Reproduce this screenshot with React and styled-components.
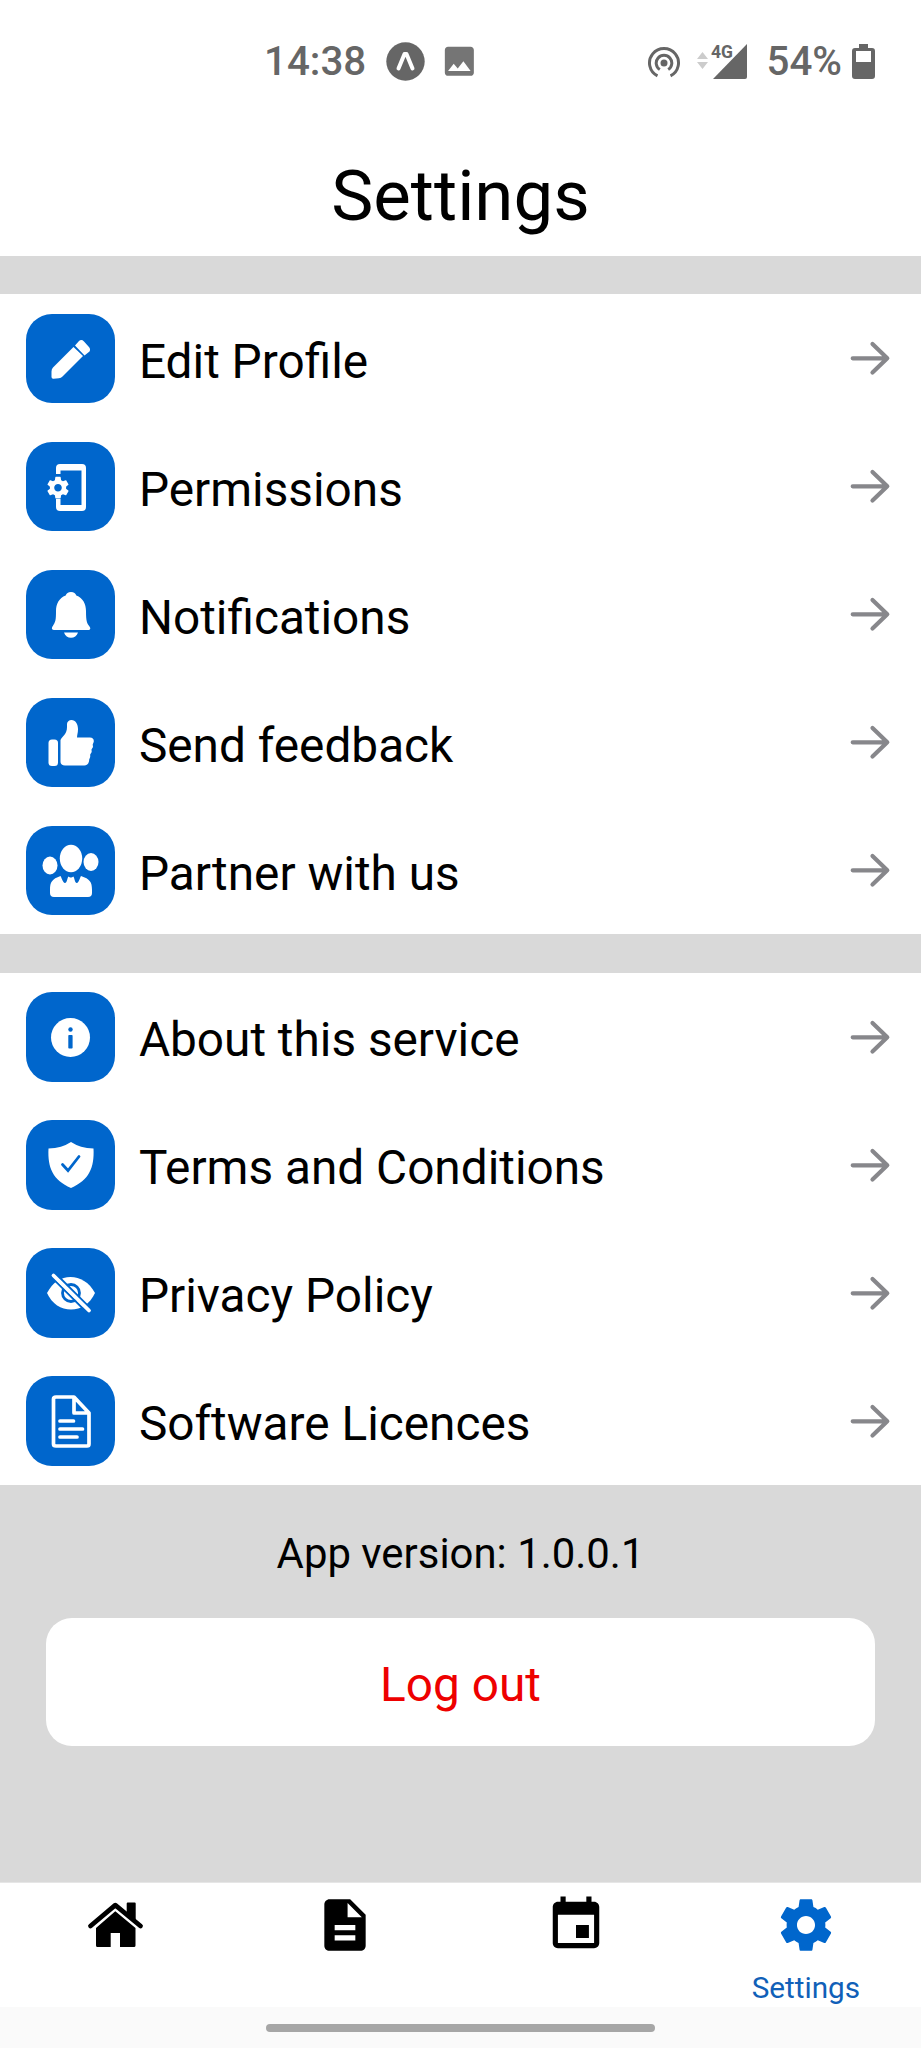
import React from "react";
import styled, { createGlobalStyle } from "styled-components";
import { MdInsertPhoto } from "react-icons/md";

const Global = createGlobalStyle`
  *{box-sizing:border-box}
  body{margin:0;background:#fff;font-family:Roboto,sans-serif;color:#000}
`;

const Screen = styled.div`
  width: 921px; height: 2048px; display: flex; flex-direction: column;
  background: #d9d9d9; overflow: hidden;
`;
const Header = styled.header`
  height: 256px; background: #fff; display: flex; flex-direction: column; flex: none;
`;
const StatusBar = styled.div`
  height: 123px; padding: 0 46px 0 264px; display: flex; align-items: center;
  justify-content: space-between; color: #666;
`;
const StatusGroup = styled.div`display: flex; align-items: center;`;
const StatusText = styled.span`
  font-size: 40.3px; font-weight: 500; line-height: 48px; margin: 0 ${p => p.$after}px 0 ${p => p.$before || 0}px;
`;
const PhotoIcon = styled(MdInsertPhoto)`
  width: 38.7px; height: 38.7px; color: #757575; margin-left: 15px;
`;
const Title = styled.h1`
  margin: 35px 0 0; text-align: center; font-weight: 400; font-size: 70.8px; line-height: 76px;
`;
const List = styled.section`margin-top: 38.4px; background: #fff; flex: none;`;
const Row = styled.div`
  height: 128px; padding: 0 26px; display: flex; align-items: center;
`;
const Tile = styled.div`
  width: 89.4px; height: 89.6px; border-radius: 26px; background: #0066cc; color: #fff;
  display: flex; flex: none;
  > svg { width: 89px; height: 90px; }
`;
const Label = styled.span`
  flex: 1; margin-left: 23.5px; padding-top: 7.4px; font-size: 47.75px; line-height: 56px; white-space: nowrap;
`;
const Version = styled.p`
  margin: 45px 0 0; text-align: center; font-size: 41.9px; line-height: 48px;
`;
const Logout = styled.button`
  margin: 39.8px 46px 0; height: 128px; border: 0; border-radius: 26px; background: #fff;
  color: #ee0000; font: 400 47.75px/56px Roboto, sans-serif; padding: 7px 0 0;
`;
const TabBar = styled.nav`
  margin-top: auto; height: 125px; flex: none; border-top: 1px solid #e6e6e6; background: #fff;
  display: grid; grid-template-columns: repeat(4, 1fr);
`;
const Tab = styled.div`
  display: flex; flex-direction: column; align-items: center; padding-top: 11px; color: ${p => p.$active ? "#0066cc" : "#000"};
  svg { width: 62px; height: 62px; flex: none; }
`;
const TabLabel = styled.span`margin-top: 14px; font-size: 29.7px; line-height: 36px; color: #1060b8;`;
const HomeIndicator = styled.div`
  height: 41px; flex: none; background: #fafafa; display: flex; justify-content: center; padding-top: 17px;
  &::before { content: ""; width: 389px; height: 8px; border-radius: 4px; background: #a6a6a6; }
`;

/* Tile drawings share one 89 x 90 canvas */
const T = ({ children }) => <svg viewBox="0 0 89 90" fill="currentColor">{children}</svg>;
const gear = "M19.43 12.98c.04-.32.07-.64.07-.98s-.03-.66-.07-.98l2.11-1.65c.19-.15.24-.42.12-.64l-2-3.46c-.12-.22-.39-.3-.61-.22l-2.49 1c-.52-.4-1.08-.73-1.69-.98l-.38-2.65C14.46 2.18 14.25 2 14 2h-4c-.25 0-.46.18-.49.42l-.38 2.65c-.61.25-1.17.59-1.69.98l-2.49-1c-.23-.09-.49 0-.61.22l-2 3.46c-.13.22-.07.49.12.64l2.11 1.65c-.04.32-.07.65-.07.98s.03.66.07.98l-2.11 1.65c-.19.15-.24.42-.12.64l2 3.46c.12.22.39.3.61.22l2.49-1c.52.4 1.08.73 1.69.98l.38 2.65c.03.24.24.42.49.42h4c.25 0 .46-.18.49-.42l.38-2.65c.61-.25 1.17-.59 1.69-.98l2.49 1c.23.09.49 0 .61-.22l2-3.46c.12-.22.07-.49-.12-.64l-2.11-1.65zM12 15.5c-1.93 0-3.5-1.57-3.5-3.5s1.57-3.5 3.5-3.5 3.5 1.57 3.5 3.5-1.57 3.5-3.5 3.5z";

const Pencil = () => <T><path d="M47.5 33 27 53.5q-1.500 1.500-1.500 4V63q0 2 2 1.800l5.500-.5q2-.2 3.500-1.800l20.500-20.500zM49 31.500 53 27q2.500-2 5 .5l4.500 5q2.500 2.500 1 5L58.500 41.500z" /></T>;
const Phone = () => <T>
  <path d="M30 32v-6q0-4 4-4h22q4 0 4 4v39q0 4-4 4H34q-4 0-4-4v-8h4.500v6h21V28.500h-21V32z" />
  <svg x="19" y="32.700" width="26" height="26" viewBox="0 0 24 24"><path d={gear} /></svg>
</T>;
const Bell = () => <T>
  <path d="M45 22c3 0 4.500 1.500 5.300 3.500C57 28 60 34 60 41c0 11 1 12 3.500 15.500 2 3-.2 3.500-2 3.500H28.500c-2 0-3.700-1-1.700-4C29.500 52 30 50 30 41c0-7 3-13 9.700-15.500C40.500 23.500 42 22 45 22zM38 62.500h14c-1 3.500-4 5.200-7 5.200s-6-1.700-7-5.200z" />
</T>;
const Thumb = () => <T>
  <rect x="22.500" y="41.500" width="9.500" height="26.500" rx="3.500" />
  <path d="M34.500 42c2-4 6.500-6 6.500-13v-3c0-2 2-4 4.500-4 4 0 6.500 4 6.500 9 0 4-1 6-1 8.500h13c3 0 4.500 2.500 3.500 5l-.8 2 .3 2.500-1.500 2.500.2 2.500-1.500 2.500v2.500l-1 2.500c0 3-1.500 6-5 6H39c-3 0-4.500-1.500-4.500-4z" />
</T>;
const People = () => <T>
  <ellipse cx="45" cy="32.500" rx="11.200" ry="13.700" />
  <ellipse cx="24" cy="39.500" rx="7.500" ry="9" /><ellipse cx="65" cy="36" rx="7.500" ry="9" />
  <path d="M24 64c0-8 2-11 10.500-14 1.200 2 2.200 6.500 4.500 7 2 0 2-4.500 3.500-6.500 1 .8 1.300 1 2.300 1s1.500-.2 2.500-1c1.500 2 1.500 6.500 3.500 6.500 2.200-.5 3-5 4.200-7C64 53 66 56 66 64v3q0 4-4 4H28q-4 0-4-4z" />
</T>;
const Info = () => <T>
  <circle cx="44.500" cy="45.500" r="19.500" />
  <g fill="#0066cc"><circle cx="44.500" cy="37.500" r="2.200" /><rect x="42.300" y="43" width="4.300" height="13.500" rx=".8" /></g>
</T>;
const Shield = () => <T>
  <path d="M45 22q9 6 22.500 6.500C68.500 48 63 60 45 68 27 60 21.500 48 22.500 28.500Q36 28 45 22z" />
  <path d="m36.500 44.500 5.500 6L53 36.500" fill="none" stroke="#0066cc" strokeWidth="2.800" strokeLinecap="round" />
</T>;
const EyeOff = () => <T>
  <path d="M21 45c6-11 14-16 23.500-16S63 34 69 45c-5 11-14 16.500-24 16.500S26 56 21 45z" />
  <circle cx="45" cy="45" r="8.500" fill="none" stroke="#0066cc" strokeWidth="2.800" />
  <path d="M26 29.500 61.500 65M29.500 25.500 65 61" stroke="#0066cc" strokeWidth="2.200" />
  <path d="m27.500 27.500 35.500 35" stroke="currentColor" strokeWidth="3.800" strokeLinecap="round" />
</T>;
const Licence = () => <T>
  <path d="M30 21h18l15 16v31q0 2-2 2H30q-2.500 0-2.500-2V23q0-2 2.500-2zM48 22v15h14M34 45h13.500M34 53h22.500M34 61h17" fill="none" stroke="currentColor" strokeWidth="3.700" strokeLinecap="round" strokeLinejoin="round" />
</T>;

const Arrow = () => <svg width="45" height="42" viewBox="0 0 45 42" fill="none" stroke="#87878b" strokeWidth="4.200" strokeLinecap="round" strokeLinejoin="round"><path d="M2.700 21.300h34.500M22.500 7l14.800 14.300-14.800 14.300" /></svg>;

const ExpoIcon = styled.svg`width: 39px; height: 39px; flex: none;`;
const Expo = () => <ExpoIcon viewBox="0 0 39 39"><circle cx="19.500" cy="19.500" r="19.200" fill="#666" /><path d="m12.500 26.500 6-14.500h2l6 14.500" fill="none" stroke="#fff" strokeWidth="4" strokeLinecap="round" strokeLinejoin="round" /></ExpoIcon>;
const HotspotIcon = styled.svg`width: 34px; height: 36px; margin-right: 15px;`;
const Hotspot = () => <HotspotIcon viewBox="0 -2 34 36" fill="none" stroke="#666" strokeWidth="3"><circle cx="17" cy="17" r="3.500" fill="#666" stroke="none" /><path d="M12.800 23.600a7.800 7.800 0 1 1 8.400 0M10.500 29.900a14.500 14.500 0 1 1 13 0" /></HotspotIcon>;
const SignalText = styled.text`font: 700 17.5px Roboto, sans-serif;`;
const Signal = () => <svg width="52" height="40" viewBox="0 1 52 40" fill="#666"><path d="m1 18 5.500-7 5.500 7zm0 3h11l-5.500 7z" fill="#ccc" /><path d="M17 38 51 3v33q0 2-2 2z" /><SignalText x="15" y="16.500">4G</SignalText></svg>;
const Battery = () => <svg width="23" height="35" viewBox="0 0 23 35" fill="#666"><path fillRule="evenodd" d="M7 0h9v4h4q3 0 3 3v25q0 3-3 3H3q-3 0-3-3V7q0-3 3-3h4zM4 7v11h15V7z" /></svg>;

const House = () => <svg viewBox="0 0 62 62"><path d="M6.500 32 31.300 11.200 56.500 32" fill="none" stroke="currentColor" strokeWidth="4.800" strokeLinecap="round" strokeLinejoin="round" /><path d="M42.700 9.500q0-1 1-1h7q1 0 1 1V28l-9-8zM31.300 17.200 51.500 34v17.500q0 1.500-1.500 1.500H36V39h-9.300v14H13.500q-1.500 0-1.500-1.500V34z" fill="currentColor" /></svg>;
const TabIcon = ({ d }) => <svg viewBox="0 0 24 24" fill="currentColor"><path d={d} /></svg>;
const doc = "M14 2H6c-1.100 0-2 .9-2 2v16c0 1.100.9 2 2 2h12c1.100 0 2-.9 2-2V8l-6-6zm2 16H8v-2h8v2zm0-4H8v-2h8v2zm-3-5V3.500L18.500 9H13z";
const cal = "M19 3h-1V1h-2v2H8V1H6v2H5c-1.100 0-2 .9-2 2v14c0 1.100.9 2 2 2h14c1.100 0 2-.9 2-2V5c0-1.100-.9-2-2-2zm0 16H5V8h14v11zm-7-7h5v5h-5z";

const account = [[Pencil, "Edit Profile"], [Phone, "Permissions"], [Bell, "Notifications"], [Thumb, "Send feedback"], [People, "Partner with us"]];
const about = [[Info, "About this service"], [Shield, "Terms and Conditions"], [EyeOff, "Privacy Policy"], [Licence, "Software Licences"]];
const Items = ({ items }) => <List>{items.map(([Icon, name]) =>
  <Row key={name}><Tile><Icon /></Tile><Label>{name}</Label><Arrow /></Row>)}</List>;

export default function App() {
  return <><Global /><Screen>
    <Header>
      <StatusBar>
        <StatusGroup><StatusText $after={20}>14:38</StatusText><Expo /><PhotoIcon /></StatusGroup>
        <StatusGroup><Hotspot /><Signal /><StatusText $before={19} $after={10}>54%</StatusText><Battery /></StatusGroup>
      </StatusBar>
      <Title>Settings</Title>
    </Header>
    <Items items={account} />
    <Items items={about} />
    <Version>App version: 1.0.0.1</Version>
    <Logout>Log out</Logout>
    <TabBar>
      <Tab><House /></Tab><Tab><TabIcon d={doc} /></Tab><Tab><TabIcon d={cal} /></Tab>
      <Tab $active><TabIcon d={gear} /><TabLabel>Settings</TabLabel></Tab>
    </TabBar>
    <HomeIndicator />
  </Screen></>;
}
